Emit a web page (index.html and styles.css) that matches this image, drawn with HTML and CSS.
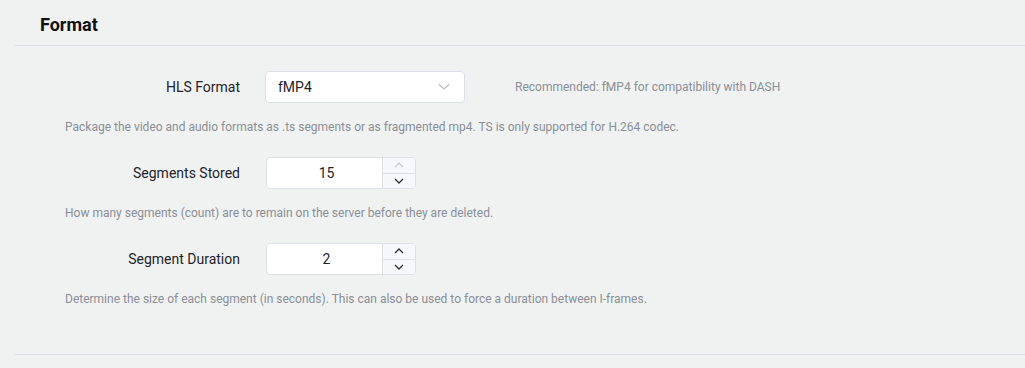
FILE: index.html
```html
<!DOCTYPE html>
<html lang="en">
<head>
  <meta charset="UTF-8">
  <meta name="viewport" content="width=device-width, initial-scale=1.0">
  <title>Format</title>
  <link rel="stylesheet" href="styles.css">
</head>
<body>
  <div class="section">
    <div class="section-header">
      <h2 class="section-title">Format</h2>
    </div>
    <div class="section-body">

      <div class="field">
        <div class="row">
          <label class="label">HLS Format</label>
          <div class="select">
            <span class="select-value">fMP4</span>
            <svg class="chevron" width="12" height="8" viewBox="0 0 12 8"><path d="M1 1.5 L6 6 L11 1.5" fill="none" stroke="#b8bcc4" stroke-width="1.2"/></svg>
          </div>
          <span class="hint">Recommended: fMP4 for compatibility with DASH</span>
        </div>
        <p class="desc">Package the video and audio formats as .ts segments or as fragmented mp4. TS is only supported for H.264 codec.</p>
      </div>

      <div class="field">
        <div class="row">
          <label class="label">Segments Stored</label>
          <div class="number">
            <span class="number-value">15</span>
            <div class="spinner">
              <span class="spin disabled"><svg width="10" height="6" viewBox="0 0 10 6"><path d="M1 5 L5 1 L9 5" fill="none" stroke="#c5c8ce" stroke-width="1.2"/></svg></span>
              <span class="spin"><svg width="10" height="6" viewBox="0 0 10 6"><path d="M1 1 L5 5 L9 1" fill="none" stroke="#303133" stroke-width="1.3"/></svg></span>
            </div>
          </div>
        </div>
        <p class="desc">How many segments (count) are to remain on the server before they are deleted.</p>
      </div>

      <div class="field">
        <div class="row">
          <label class="label">Segment Duration</label>
          <div class="number">
            <span class="number-value">2</span>
            <div class="spinner">
              <span class="spin"><svg width="10" height="6" viewBox="0 0 10 6"><path d="M1 5 L5 1 L9 5" fill="none" stroke="#303133" stroke-width="1.3"/></svg></span>
              <span class="spin"><svg width="10" height="6" viewBox="0 0 10 6"><path d="M1 1 L5 5 L9 1" fill="none" stroke="#303133" stroke-width="1.3"/></svg></span>
            </div>
          </div>
        </div>
        <p class="desc">Determine the size of each segment (in seconds). This can also be used to force a duration between I-frames.</p>
      </div>

    </div>
  </div>
</body>
</html>
```
FILE: styles.css
```css
* {
  margin: 0;
  padding: 0;
  box-sizing: border-box;
}

body {
  font-family: Roboto, "Liberation Sans", sans-serif;
  background-color: #f0f2f2;
  color: #1f2329;
}

.section {
  margin-left: 15px;
  border-bottom: 1px solid #dcdfe6;
}

.section-header {
  height: 46px;
  padding-left: 25px;
  border-bottom: 1px solid #dcdfe6;
  display: flex;
  align-items: center;
}

.section-title {
  font-size: 18px;
  font-weight: 700;
  color: #111;
  margin-top: 4px;
}

.section-body {
  padding: 25px 0 46px 50px;
}

.field {
  margin-bottom: 21px;
}

.field:last-child {
  margin-bottom: 0;
}

.row {
  display: flex;
  align-items: center;
  height: 32px;
}

.label {
  width: 175px;
  margin-right: 25px;
  margin-top: -1px;
  text-align: right;
  font-size: 14px;
  color: #1f2329;
}

.select {
  width: 200px;
  height: 32px;
  background: #fff;
  border: 1px solid #dcdfe6;
  border-radius: 4px;
  display: flex;
  align-items: center;
  justify-content: space-between;
  padding: 0 14px 0 12px;
  font-size: 14px;
}

.hint {
  margin-left: 50px;
  font-size: 12px;
  color: #8a8e96;
}

.number {
  width: 150px;
  height: 32px;
  margin-left: 1px;
  background: #fff;
  border: 1px solid #dcdfe6;
  border-radius: 4px;
  display: flex;
  overflow: hidden;
}

.number-value {
  flex: 1;
  display: flex;
  align-items: center;
  justify-content: center;
  padding-left: 4px;
  font-size: 14px;
}

.spinner {
  width: 33px;
  border-left: 1px solid #dcdfe6;
  display: flex;
  flex-direction: column;
  background: #f5f7fa;
}

.spin {
  flex: 1;
  display: flex;
  align-items: center;
  justify-content: center;
}

.spin + .spin {
  border-top: 1px solid #dcdfe6;
}

.desc {
  margin-top: 15px;
  font-size: 12px;
  line-height: 18px;
  color: #8a8e96;
}
```
